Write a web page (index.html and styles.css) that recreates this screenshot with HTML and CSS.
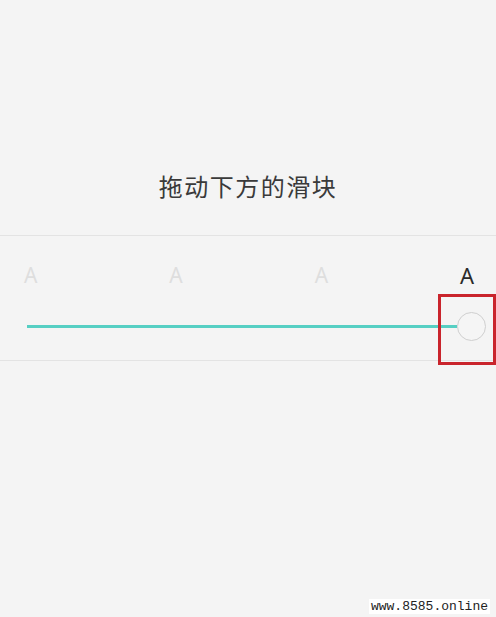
FILE: index.html
```html
<!DOCTYPE html>
<html lang="zh">
<head>
<meta charset="utf-8">
<link rel="stylesheet" href="styles.css">
</head>
<body>
<div class="page">
  <h1 class="title">拖动下方的滑块</h1>
  <section class="panel">
    <div class="labels">
      <span class="lbl">A</span>
      <span class="lbl">A</span>
      <span class="lbl">A</span>
      <span class="lbl active">A</span>
    </div>
    <div class="slider">
      <div class="track"></div>
      <div class="knob"></div>
      <div class="highlight"></div>
    </div>
  </section>
  <div class="watermark">www.8585.online</div>
</div>
</body>
</html>
```
FILE: styles.css
```css
html, body {
  margin: 0;
  padding: 0;
  background: #f4f4f4;
}
.page {
  position: relative;
  width: 496px;
  height: 617px;
  overflow: hidden;
  font-family: "Noto Sans CJK SC", "Noto Sans", sans-serif;
}
.title {
  margin: 0 0 31px;
  padding-top: 168px;
  text-align: center;
  font-size: 24px;
  font-weight: normal;
  line-height: 36px;
  color: #3a3a3a;
  letter-spacing: 1.5px;
}
.panel {
  border-top: 1px solid #e3e3e3;
  border-bottom: 1px solid #e3e3e3;
  height: 124px;
}
.labels {
  display: flex;
  justify-content: space-between;
  padding: 24px 22px 0 24px;
  height: 30px;
}
.lbl {
  font-family: "Noto Sans", sans-serif;
  font-size: 21px;
  line-height: 30px;
  color: #dedede;
}
.lbl.active {
  font-size: 22px;
  color: #2a2a2a;
}
.slider {
  position: relative;
  display: flex;
  align-items: center;
  padding: 0 10px 0 27px;
  margin-top: 21px;
  height: 30px;
}
.track {
  flex: 1;
  height: 3px;
  background: #56cfc3;
}
.knob {
  width: 27px;
  height: 27px;
  border: 1px solid #cfcfcf;
  border-radius: 50%;
  background: #f5f5f5;
}
.highlight {
  position: absolute;
  left: 438px;
  top: -17px;
  width: 58px;
  height: 71px;
  box-sizing: border-box;
  border: 3px solid #c9242c;
}
.watermark {
  position: absolute;
  right: 6px;
  bottom: 3px;
  font-family: "Liberation Mono", monospace;
  font-size: 13px;
  color: #222;
  background: #fff;
  padding: 0 2px;
}
```
